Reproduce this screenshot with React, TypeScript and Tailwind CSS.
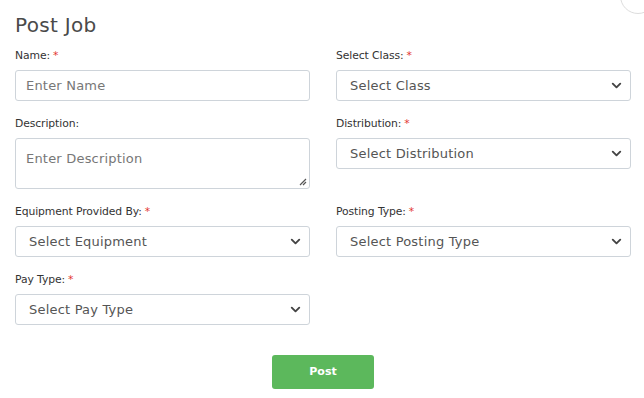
import { ChevronDown } from 'lucide-react'

const font = { fontFamily: '"DejaVu Sans", "Noto Sans", sans-serif' }

function Label({ text, required }: { text: string; required?: boolean }) {
  return (
    <div className="text-[10.8px] leading-[14px] text-[#333] mb-[7px] tracking-[-0.1px]">
      {text}
      {required && <span className="text-[#e3342f] ml-[3px]">*</span>}
    </div>
  )
}

function Select({ placeholder }: { placeholder: string }) {
  return (
    <div className="h-[31px] rounded-[3px] border border-[#ced4da] flex items-center justify-between pl-[13px] pr-[6px]">
      <span className="text-[13px] text-[#555] tracking-[0.2px]">{placeholder}</span>
      <ChevronDown size={15} strokeWidth={3} className="text-[#444]" />
    </div>
  )
}

function Input({ placeholder }: { placeholder: string }) {
  return (
    <div className="h-[31px] rounded-[3px] border border-[#ced4da] flex items-center px-[10px]">
      <span className="text-[13px] text-[#777] tracking-[0.2px]">{placeholder}</span>
    </div>
  )
}

export default function App() {
  return (
    <div className="relative w-[644px] h-[398px] bg-white overflow-hidden" style={font}>
      <div className="absolute -top-[22px] -right-[12px] w-[36px] h-[36px] rounded-full border border-[#ddd] bg-white" />
      <div className="pl-[15px] pr-[13px] pt-[12px]">
        <h1 className="text-[20px] leading-[26px] text-[#4a4a4a] font-medium mb-[11px] tracking-[0.3px]">Post Job</h1>
        <div className="grid grid-cols-2 gap-x-[26px] gap-y-[16px]">
          <div>
            <Label text="Name:" required />
            <Input placeholder="Enter Name" />
          </div>
          <div>
            <Label text="Select Class:" required />
            <Select placeholder="Select Class" />
          </div>
          <div>
            <Label text="Description:" />
            <div className="relative h-[51px] rounded-[3px] border border-[#ced4da] px-[10px] pt-[7px]">
              <span className="text-[13px] text-[#777] tracking-[0.2px]">Enter Description</span>
              <svg className="absolute right-[2px] bottom-[2px]" width="8" height="8" viewBox="0 0 8 8">
                <path d="M7 1 L1 7 M7 4 L4 7" stroke="#555" strokeWidth="1.2" />
              </svg>
            </div>
          </div>
          <div>
            <Label text="Distribution:" required />
            <Select placeholder="Select Distribution" />
          </div>
          <div>
            <Label text="Equipment Provided By:" required />
            <Select placeholder="Select Equipment" />
          </div>
          <div>
            <Label text="Posting Type:" required />
            <Select placeholder="Select Posting Type" />
          </div>
          <div>
            <Label text="Pay Type:" required />
            <Select placeholder="Select Pay Type" />
          </div>
        </div>
        <div className="flex justify-center mt-[30px]">
          <button className="w-[102px] h-[34px] rounded-[3px] bg-[#5cb85c] text-white text-[11px] font-bold">
            Post
          </button>
        </div>
      </div>
    </div>
  )
}
